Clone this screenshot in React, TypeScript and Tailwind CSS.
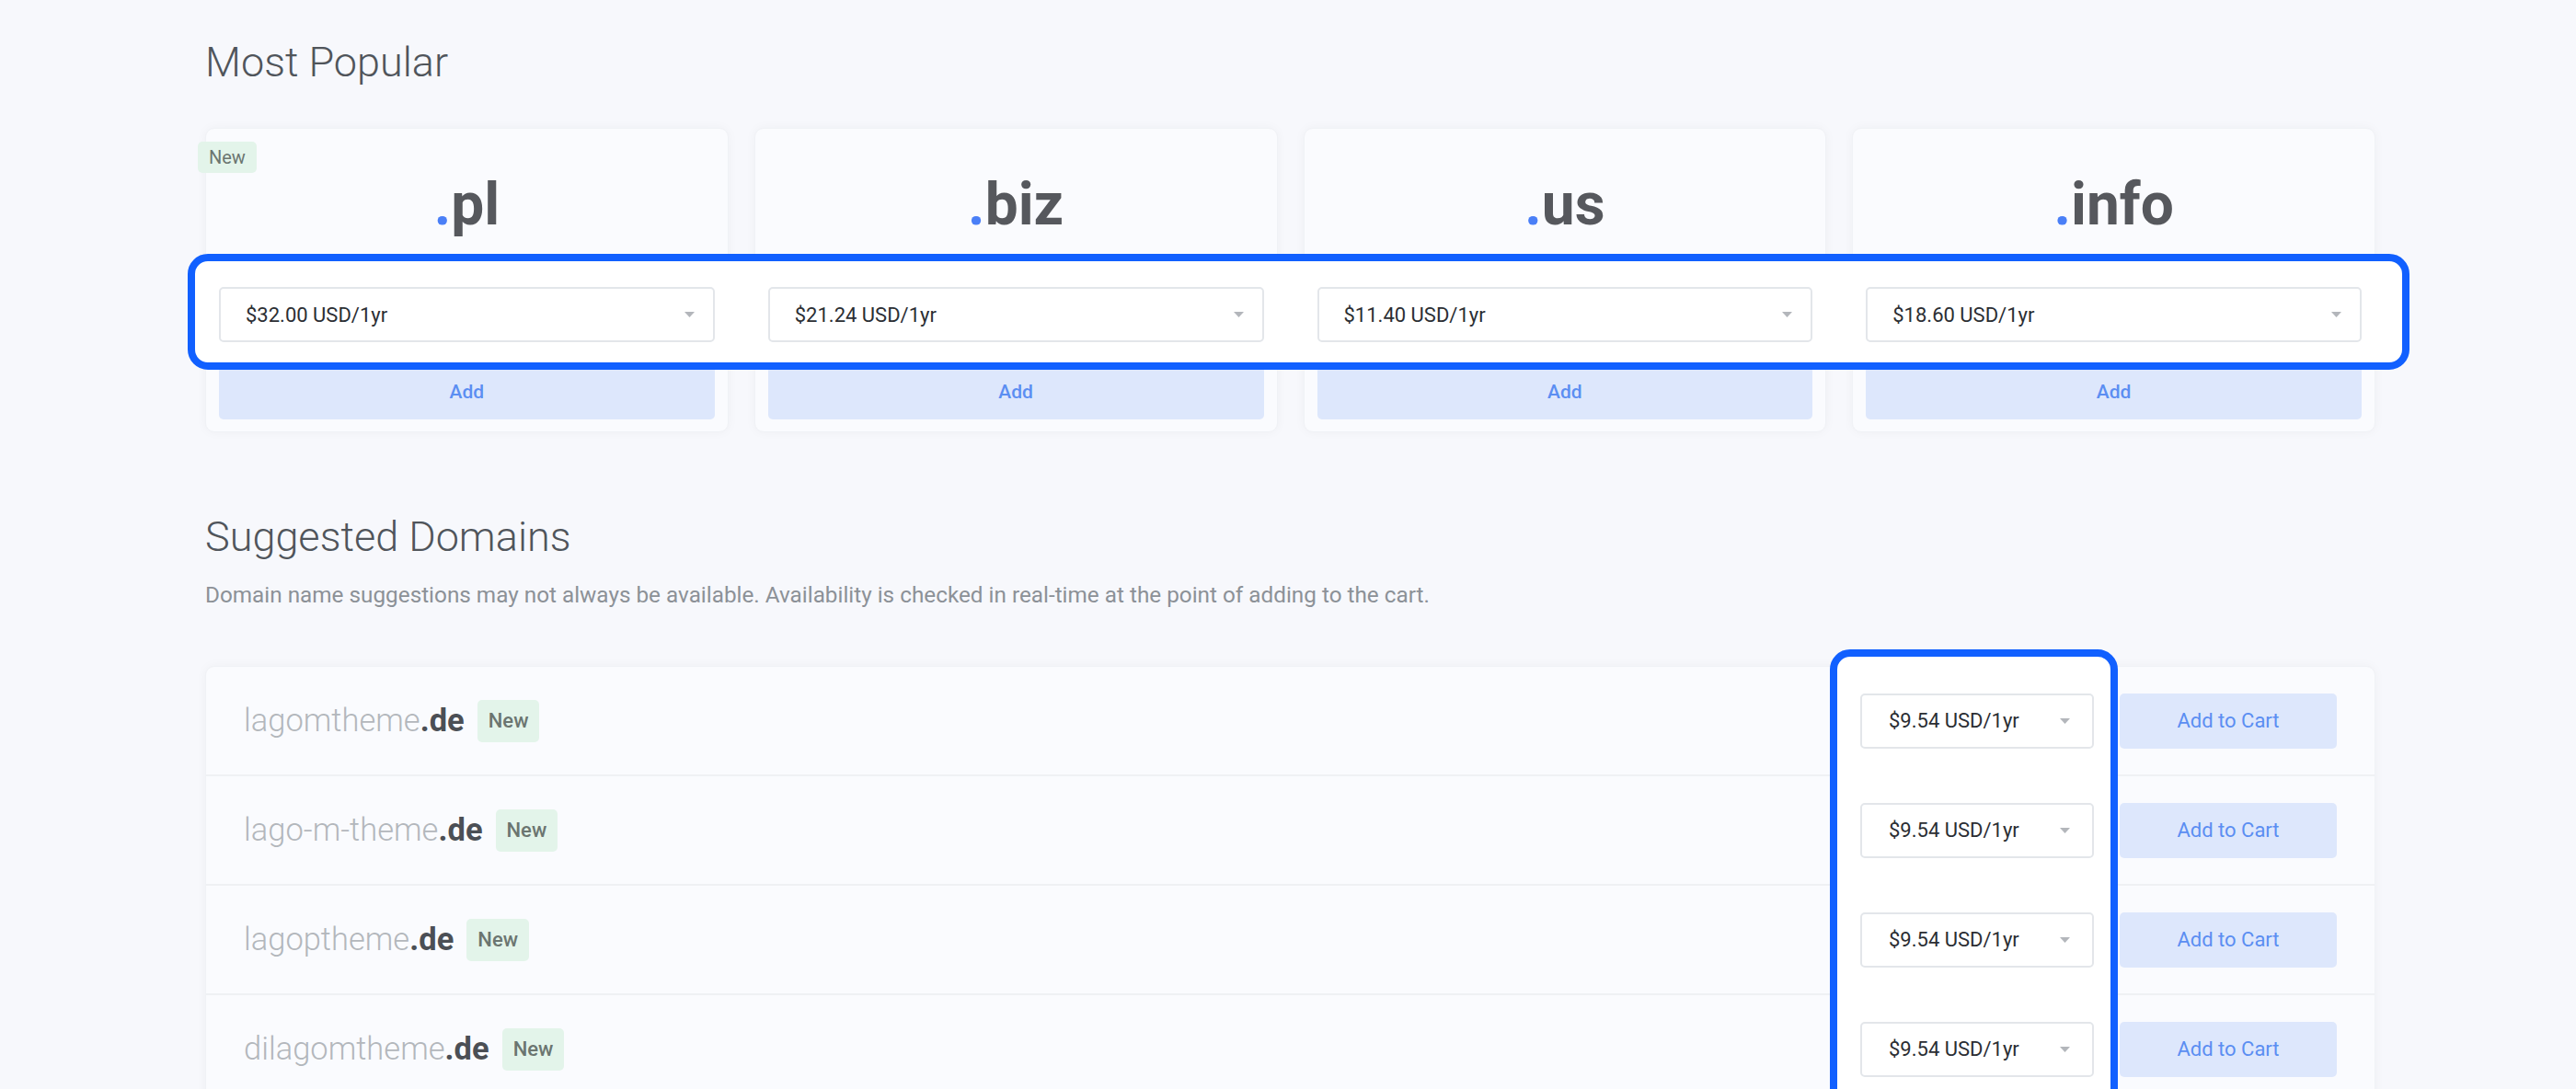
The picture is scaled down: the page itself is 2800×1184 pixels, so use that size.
import { useState } from 'react'

interface PopularTld {
  tld: string
  price: string
  isNew?: boolean
}

interface Suggestion {
  name: string
  tld: string
  price: string
}

const popular: PopularTld[] = [
  { tld: 'pl', price: '$32.00 USD/1yr', isNew: true },
  { tld: 'biz', price: '$21.24 USD/1yr' },
  { tld: 'us', price: '$11.40 USD/1yr' },
  { tld: 'info', price: '$18.60 USD/1yr' },
]

const suggestions: Suggestion[] = [
  { name: 'lagomtheme', tld: 'de', price: '$9.54 USD/1yr' },
  { name: 'lago-m-theme', tld: 'de', price: '$9.54 USD/1yr' },
  { name: 'lagoptheme', tld: 'de', price: '$9.54 USD/1yr' },
  { name: 'dilagomtheme', tld: 'de', price: '$9.54 USD/1yr' },
  { name: 'lagomthemes', tld: 'de', price: '$9.54 USD/1yr' },
]

function Caret() {
  return (
    <svg width="11" height="6" viewBox="0 0 11 6" className="shrink-0">
      <path d="M0 0h11L5.5 6z" fill="#b3b6bb" />
    </svg>
  )
}

function PriceSelect({ price, className }: { price: string; className?: string }) {
  return (
    <div
      className={`flex h-[60px] items-center justify-between rounded-[5px] border-2 border-[#e3e6ea] bg-white pl-[27px] pr-[20px] text-[22px] text-[#2b2e33] ${className ?? ''}`}
    >
      <span>{price}</span>
      <Caret />
    </div>
  )
}

function NewBadge({ className }: { className?: string }) {
  return (
    <span
      className={`inline-flex items-center rounded-[5px] bg-[#e3f4ea] text-[#6b7570] ${className ?? ''}`}
    >
      New
    </span>
  )
}

function TldCard({ tld, price, isNew }: PopularTld) {
  return (
    <div className="relative flex flex-col rounded-[10px] border border-[#f0f2f6] bg-[#fafbfe] px-[14px] pb-[13px] pt-[51px] shadow-[0_0_12px_rgba(30,40,60,0.04)]">
      {isNew && (
        <NewBadge className="absolute -left-[9px] top-[14px] h-[34px] px-[12px] text-[20px]" />
      )}
      <div className="text-center text-[64px] font-bold leading-[64px] text-[#56585d]">
        <span className="text-[#4a7ff7]">.</span>
        {tld}
      </div>
      <div className="relative z-20 mt-[57px]">
        <PriceSelect price={price} />
      </div>
      <button className="mt-[25px] h-[59px] rounded-[5px] bg-[#dde7fc] text-[21px] font-medium text-[#5b8ef2]">
        Add
      </button>
    </div>
  )
}

function SuggestionRow({ name, tld, price }: Suggestion) {
  return (
    <div className="flex h-[119px] items-center justify-between border-b-2 border-[#eff1f4] px-[41px]">
      <div className="flex items-center gap-[14px]">
        <span className="text-[34.5px] font-light text-[#b3b7bc]">
          {name}
          <span className="font-bold text-[#4b4f55]">.{tld}</span>
        </span>
        <NewBadge className="h-[46px] px-[12px] text-[22px] font-medium" />
      </div>
      <div className="flex items-center gap-[28px]">
        <div className="relative z-20">
          <PriceSelect price={price} className="w-[254px] pl-[29px] pr-[24px]" />
        </div>
        <button className="h-[60px] w-[236px] rounded-[5px] bg-[#dde7fc] text-[22px] text-[#5b8ef2]">
          Add to Cart
        </button>
      </div>
    </div>
  )
}

export default function App() {
  const [highlight] = useState(true)

  return (
    <div className="h-[1184px] overflow-hidden bg-[#f7f8fc] font-['Roboto',sans-serif]">
      <div className="ml-[223px] w-[2359px] pt-[40px]">
        <h2 className="text-[45px] font-light leading-[56px] text-[#50555b]">Most Popular</h2>

        <div className="relative mt-[43px]">
          {highlight && (
            <div className="absolute -left-[19px] top-[137px] z-10 h-[126px] w-[2415px] rounded-[22px] border-[8px] border-[#1160ff] bg-white" />
          )}
          <div className="grid grid-cols-4 gap-[28px]">
            {popular.map((p) => (
              <TldCard key={p.tld} {...p} />
            ))}
          </div>
        </div>

        <h2 className="mt-[86px] text-[45px] font-light leading-[56px] text-[#50555b]">
          Suggested Domains
        </h2>
        <p className="mt-[18px] text-[24.3px] leading-[33px] text-[#8c9197]">
          Domain name suggestions may not always be available. Availability is checked in real-time at the point of adding to the cart.
        </p>

        <div className="relative mt-[61px]">
          {highlight && (
            <div className="absolute left-[1766px] -top-[18px] z-10 h-[700px] w-[313px] rounded-[22px] border-[8px] border-[#1160ff] bg-white" />
          )}
          <div className="rounded-[10px] border border-[#f0f2f6] bg-[#fafbfe] shadow-[0_0_12px_rgba(30,40,60,0.04)]">
            {suggestions.map((s) => (
              <SuggestionRow key={s.name} {...s} />
            ))}
          </div>
        </div>
      </div>
    </div>
  )
}
